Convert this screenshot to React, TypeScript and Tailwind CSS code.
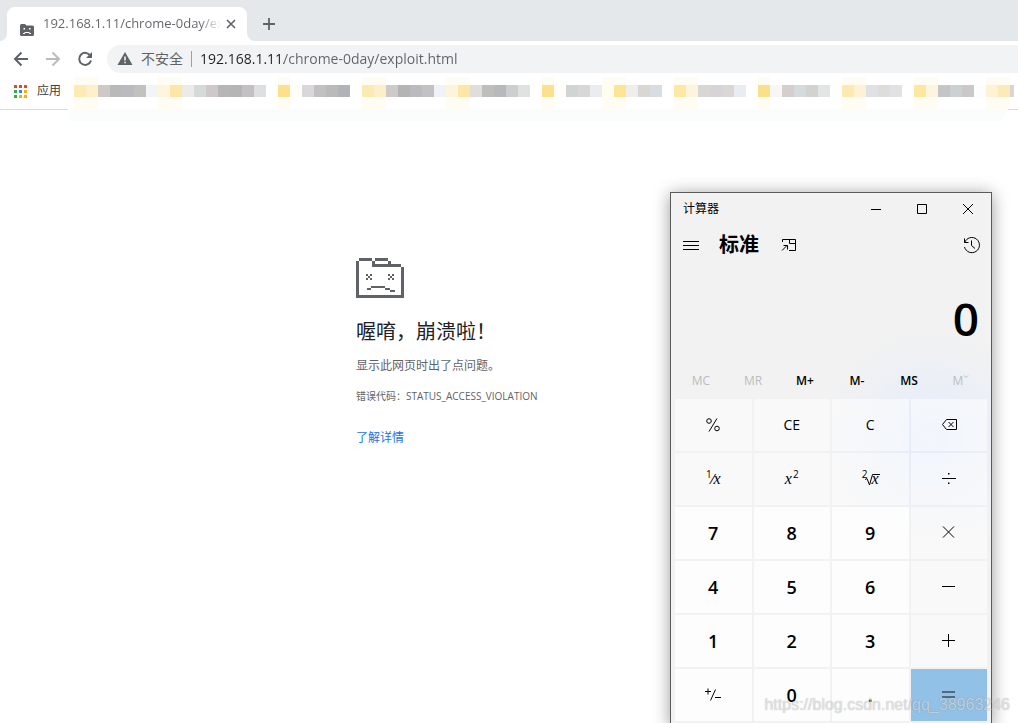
import type { ReactNode } from 'react';

// '' leaves a gap between two bookmarks
const bookmarkCells = [
  'bg-[#fdebb3]', 'bg-[#fdf0cb]', 'bg-[#cec9c6]', 'bg-[#b9b9b9]', 'bg-[#bcbabe]', 'bg-[#c1c2c0]', 'bg-[#f3f4f8]',
  'bg-[#fff5dd]', 'bg-[#fde7a6]', 'bg-[#ebebe9]', 'bg-[#d5dad8]', 'bg-[#cec8cb]', 'bg-[#b7b5b8]', 'bg-[#b5b5b5]',
  'bg-[#c3c0c4]', 'bg-[#dedfe1]', '', 'bg-[#fce08c]', 'bg-[#fffdf8]', 'bg-[#d9d7d9]', 'bg-[#c0c1c0]',
  'bg-[#bbbaba]', 'bg-[#b2b3b8]', '', 'bg-[#fceab3]', 'bg-[#fbf0cb]', 'bg-[#cfcaca]', 'bg-[#b4b4b4]',
  'bg-[#bcbabe]', 'bg-[#c2c2c5]', 'bg-[#f1f2f6]', 'bg-[#fdf4dc]', 'bg-[#fde7a6]', 'bg-[#e2dddd]', 'bg-[#bebebb]',
  'bg-[#b8b9bc]', 'bg-[#cdcecf]', 'bg-[#dfe2e1]', '', 'bg-[#fce08c]', 'bg-[#fffdfa]', 'bg-[#d0d4d3]',
  'bg-[#d8d7d5]', 'bg-[#eaecf0]', 'bg-[#fffcf0]', 'bg-[#fde596]', 'bg-[#f0eeed]', 'bg-[#d8d7d4]', 'bg-[#d8dce3]',
  '', 'bg-[#fde8a4]', 'bg-[#fdf4dc]', 'bg-[#d7d7d5]', 'bg-[#d6d4d7]', 'bg-[#dbd7d6]', 'bg-[#e9edf2]',
  '', 'bg-[#fbe08a]', 'bg-[#f8f7f6]', 'bg-[#d4cfcd]', 'bg-[#d5dadd]', 'bg-[#d2d3d1]', 'bg-[#e3e4e4]',
  '', 'bg-[#fdeab0]', 'bg-[#fdf2d5]', 'bg-[#e0e1e2]', 'bg-[#dddedc]', 'bg-[#e2e2e5]', '',
  'bg-[#fde8a2]', 'bg-[#fdf5df]', 'bg-[#c4c5c6]', 'bg-[#cbd0d2]', 'bg-[#cac9c7]', 'bg-[#fcfdff]', 'bg-[#fef2d3]',
  'bg-[#fbeaba]',
];

// cells where a folder icon sits, they have a pale halo above and below
const folderCells = [0, 1, 7, 8, 17, 24, 25, 31, 32, 39, 44, 45, 50, 51, 57, 64, 65, 70, 71, 76, 77];

const appDots = [
  'bg-[#ea4335]', 'bg-[#ea4335]', 'bg-[#ea4335]',
  'bg-[#34a853]', 'bg-[#1a8cff]', 'bg-[#fbab05]',
  'bg-[#34a853]', 'bg-[#fbab05]', 'bg-[#fbab05]',
];

const memoryKeys = [
  { label: 'MC', disabled: true },
  { label: 'MR', disabled: true },
  { label: 'M+', disabled: false },
  { label: 'M-', disabled: false },
  { label: 'MS', disabled: false },
];

function LineIcon({ d, className = 'size-4' }: { d: string; className?: string }) {
  return (
    <svg className={className} viewBox="0 0 16 16" fill="none" stroke="currentColor" strokeWidth={1}>
      <path d={d} />
    </svg>
  );
}

type KeyKind = 'number' | 'function' | 'equals';

const keys: { name: string; kind: KeyKind; face: ReactNode }[] = [
  {
    name: '百分比',
    kind: 'function',
    face: (
      <svg className="size-4" viewBox="0 0 16 16" fill="none" stroke="currentColor" strokeWidth={1}>
        <circle cx="4" cy="4" r="2.300" />
        <circle cx="12" cy="11.500" r="2.300" />
        <path d="M12 1.500L4 14.500" />
      </svg>
    ),
  },
  { name: '清除条目', kind: 'function', face: 'CE' },
  { name: '清除', kind: 'function', face: 'C' },
  { name: '退格', kind: 'function', face: <LineIcon d="M5.500 2.500H15.500V12.500H5.500L1.500 7.500ZM7.500 5L12.500 10M12.500 5L7.500 10" /> },
  {
    name: '倒数',
    kind: 'function',
    face: (
      <span className="flex items-center">
        <sup className="text-[10px]">1</sup>
        <span>⁄</span>
        <i className="font-['Liberation_Serif',serif] text-base">x</i>
      </span>
    ),
  },
  {
    name: '平方',
    kind: 'function',
    face: (
      <span className="flex items-center">
        <i className="font-['Liberation_Serif',serif] text-base">x</i>
        <sup className="ml-px text-[10px]">2</sup>
      </span>
    ),
  },
  {
    name: '平方根',
    kind: 'function',
    face: (
      <span className="flex items-center">
        <sup className="-mr-1 text-[10px]">2</sup>
        <svg className="-mr-2 h-4 w-4" viewBox="0 0 16 16" fill="none" stroke="currentColor">
          <path d="M1 8.500L3 7.500L5.500 14L8.500 3.500H16" />
        </svg>
        <i className="font-['Liberation_Serif',serif] text-base">x</i>
      </span>
    ),
  },
  {
    name: '除以',
    kind: 'function',
    face: (
      <svg className="size-4" viewBox="0 0 16 16" fill="currentColor">
        <path d="M1 7H15V8H1ZM7 2H8.500V3.500H7ZM7 11.500H8.500V13H7Z" />
      </svg>
    ),
  },
  { name: '7', kind: 'number', face: '7' },
  { name: '8', kind: 'number', face: '8' },
  { name: '9', kind: 'number', face: '9' },
  { name: '乘以', kind: 'function', face: <LineIcon d="M2 1.500L13 12.500M13 1.500L2 12.500" /> },
  { name: '4', kind: 'number', face: '4' },
  { name: '5', kind: 'number', face: '5' },
  { name: '6', kind: 'number', face: '6' },
  { name: '减', kind: 'function', face: <LineIcon d="M1 7.500H14" /> },
  { name: '1', kind: 'number', face: '1' },
  { name: '2', kind: 'number', face: '2' },
  { name: '3', kind: 'number', face: '3' },
  { name: '加', kind: 'function', face: <LineIcon d="M1 7.500H14M7.500 1V14" /> },
  { name: '正负', kind: 'number', face: <LineIcon d="M0 4.500H6M3 1.500V7.500M10.500 2.500L5.500 13.500M10 10.500H16" /> },
  { name: '0', kind: 'number', face: '0' },
  { name: '小数点', kind: 'number', face: '.' },
  {
    name: '等于',
    kind: 'equals',
    face: (
      <svg className="size-4" viewBox="0 0 16 16" fill="currentColor">
        <path d="M1 4H14V6H1ZM1 9H14V11H1Z" />
      </svg>
    ),
  },
];

const keyStyles: Record<KeyKind, string> = {
  number: 'bg-white/85 text-lg font-semibold',
  function: 'bg-white/50 text-sm',
  equals: 'bg-[#91c1e7] text-[#4f6b82]',
};

function TabStrip() {
  return (
    <div className="flex h-[41px] items-end bg-[#e5e8eb] text-[#5f6368]">
      <div className="h-2 w-[7px] bg-white">
        <div className="h-full rounded-br-lg bg-[#e5e8eb]" />
      </div>
      <div className="flex h-[34px] w-60 items-center rounded-t-lg bg-white pr-2.5 pl-3">
        <svg className="mt-3 mr-2 h-3 w-4 shrink-0" viewBox="0 0 16 12">
          <path d="M1 1.500Q1 0 2.500 0H6L7.500 1.500H13.500Q15 1.500 15 3V10.500Q15 12 13.500 12H2.500Q1 12 1 10.500Z" fill="#5f6368" />
          <path d="M4.500 4H6V5.500H4.500ZM10 4H11.500V5.500H10ZM5.500 8H10.500V9H12V10H10V9H6V10H4V9H5.500Z" fill="#fff" />
        </svg>
        <span className="min-w-0 flex-1 overflow-hidden bg-[linear-gradient(90deg,#5f6368_88%,transparent)] bg-clip-text text-[13px] whitespace-nowrap text-transparent">
          192.168.1.11/chrome-0day/exploit.html
        </span>
        <button aria-label="关闭标签页" className="ml-1">
          <svg className="size-3" viewBox="0 0 12 12" stroke="currentColor" strokeWidth={1.6}>
            <path d="M2 2L10 10M10 2L2 10" />
          </svg>
        </button>
      </div>
      <div className="h-2 w-2 bg-white">
        <div className="h-full rounded-bl-lg bg-[#e5e8eb]" />
      </div>
      <button aria-label="打开新的标签页" className="ml-2 flex h-[34px] items-center">
        <svg className="size-3" viewBox="0 0 12 12" stroke="currentColor" strokeWidth={1.8}>
          <path d="M6 0V12M0 6H12" />
        </svg>
      </button>
    </div>
  );
}

function Toolbar() {
  return (
    <div className="flex h-9 items-center pl-[13px] text-[#5f6368]">
      <button aria-label="后退" className="mr-4">
        <svg className="size-4" viewBox="0 0 16 16" fill="none" stroke="currentColor" strokeWidth={2}>
          <path d="M15 8H2.500M8.500 1.500L2 8L8.500 14.500" />
        </svg>
      </button>
      <button aria-label="前进" disabled className="mr-4 text-[#babcbe]">
        <svg className="size-4" viewBox="0 0 16 16" fill="none" stroke="currentColor" strokeWidth={2}>
          <path d="M1 8H13.500M7.500 1.500L14 8L7.500 14.500" />
        </svg>
      </button>
      <button aria-label="重新加载" className="mr-3.5">
        <svg className="size-4" viewBox="0 0 16 16" fill="none" stroke="currentColor" strokeWidth={2}>
          <path d="M13.500 5A6 6 0 1 0 14 9.500" />
          <path d="M15 1V7H9Z" fill="currentColor" stroke="none" />
        </svg>
      </button>
      <div className="flex h-7 flex-1 items-center rounded-l-full bg-[#f1f3f4] pl-2.5 text-sm">
        <svg className="size-4" viewBox="0 0 16 16">
          <path d="M8 1L15.500 14H0.500Z" fill="#5f6368" />
          <path d="M7.200 5.500H8.800V9.500H7.200ZM7.200 10.700H8.800V12.200H7.200Z" fill="#f1f3f4" />
        </svg>
        <span className="ml-2 whitespace-nowrap">不安全</span>
        <span className="mx-2 h-4 w-px bg-[#9aa0a6]" />
        <input
          aria-label="地址栏"
          defaultValue="192.168.1.11/chrome-0day/exploit.html"
          className="min-w-0 flex-1 bg-[linear-gradient(90deg,#202124_84px,#5f6368_84px)] bg-clip-text text-transparent outline-none"
        />
      </div>
    </div>
  );
}

function BookmarksBar() {
  return (
    <div className="relative flex h-[33px] items-start border-b border-[#d9dbdd] pt-1.5 pl-3.5">
      <button className="flex items-center text-xs text-[#3c4043]">
        <span className="grid grid-cols-3 gap-0.5">
          {appDots.map((color, i) => (
            <span key={i} className={`size-[3px] ${color}`} />
          ))}
        </span>
        <span className="ml-2.5 whitespace-nowrap">应用</span>
      </button>
      <div className="absolute top-8 right-2.5 left-[68px] h-3 rounded-bl-[32px] rounded-br-[64px] bg-[#fbfdfc]" />
      <div className="absolute inset-y-0 right-0 left-[74px] flex overflow-hidden">
        {bookmarkCells.map((color, i) => (
          <div
            key={i}
            className={`w-3 shrink-0 pt-2 ${folderCells.includes(i) ? 'bg-[#fffcf4]' : ''}`}
          >
            <div className={`h-3 w-full ${color}`} />
          </div>
        ))}
        <div className="mt-2 h-3 w-1 shrink-0 bg-[#d8d6d5]" />
      </div>
    </div>
  );
}

function CrashPage() {
  return (
    <main className="mx-auto w-[306px] pt-[148px] text-xs text-[#5f6368]">
      <svg className="h-10 w-12" viewBox="0 0 48 40" fill="#5f6368" shapeRendering="crispEdges">
        <path d="M3 0H16V3H3ZM19 0H32V3H19ZM32 3H35V6H32ZM16 3H19V6H45V9H16ZM0 3H3V37H45V9H48V40H0Z" />
        <path d="M10 16h2v2h-2zM14 16h2v2h-2zM12 18h2v2h-2zM10 20h2v2h-2zM14 20h2v2h-2z" />
        <path d="M32 16h2v2h-2zM36 16h2v2h-2zM34 18h2v2h-2zM32 20h2v2h-2zM36 20h2v2h-2z" />
        <path d="M15 28H29V30H15ZM11 30H15V32H11ZM29 30H34V32H29ZM34 32H39V34H34Z" />
      </svg>
      <h1 className="mt-5 text-xl leading-7 text-[#202124]">喔唷，崩溃啦！</h1>
      <p className="mt-3 leading-4">显示此网页时出了点问题。</p>
      <p className="mt-4 text-[10px] leading-3">错误代码：STATUS_ACCESS_VIOLATION</p>
      <a href="#details" className="mt-7 inline-block text-[#1a73e8]">
        了解详情
      </a>
    </main>
  );
}

function Calculator() {
  return (
    <section className="absolute top-48 right-[26px] w-[322px] border border-[#5a5a5a] bg-[#f2f2f2] bg-[radial-gradient(circle_at_260px_245px,#e3ecfa,#f2f2f2_110px)] pb-1 text-black shadow-[0_2px_16px_rgba(0,0,0,0.4)]">
      <header className="flex h-8 items-center pl-3 text-xs">
        <span className="flex-1">计算器</span>
        <button aria-label="最小化" className="flex w-[46px] justify-center">
          <LineIcon d="M3 8.500H13" />
        </button>
        <button aria-label="最大化" className="flex w-[46px] justify-center">
          <LineIcon d="M3.500 3.500H12.500V12.500H3.500Z" />
        </button>
        <button aria-label="关闭" className="flex w-[46px] justify-center">
          <LineIcon d="M3 3L13 13M13 3L3 13" />
        </button>
      </header>
      <div className="flex h-10 items-center pr-2.5 pl-3">
        <button aria-label="打开导航">
          <LineIcon d="M0 4.500H16M0 8.500H16M0 12.500H16" />
        </button>
        <h2 className="ml-5 text-xl font-bold">标准</h2>
        <button aria-label="保持在顶部" className="ml-[22px]">
          <LineIcon d="M1.500 5V2.500H14.500V13.500H8M8.500 2.500V6.500H14.500M1 13.500L6 8.500M2.500 8.500H6.500V12.500" />
        </button>
        <button aria-label="历史记录" className="ml-auto">
          <svg className="size-[18px]" viewBox="0 0 18 18" fill="none" stroke="currentColor" strokeWidth={1}>
            <path d="M1.500 2.500V6.500H5.500M1.700 6.500A7.600 7.600 0 1 1 1.500 11M8.500 4.500V9.500L12 12.500" />
          </svg>
        </button>
      </div>
      <output className="flex h-[98px] items-center justify-end px-3 pt-2 text-[46px] leading-none font-semibold">0</output>
      <div className="grid h-9 grid-cols-6 px-1 text-xs">
        {memoryKeys.map(({ label, disabled }) => (
          <button key={label} disabled={disabled} className="font-semibold disabled:font-normal disabled:text-[#bdbdbd]">
            {label}
          </button>
        ))}
        <button disabled className="flex items-center justify-center text-[#bdbdbd]">
          M
          <svg className="mb-2 h-1 w-1.5" viewBox="0 0 6 4" fill="none" stroke="currentColor">
            <path d="M1 0.500L3 2.500L5 0.500" />
          </svg>
        </button>
      </div>
      <div className="grid grid-cols-4 gap-0.5 px-1">
        {keys.map(({ name, kind, face }) => (
          <button key={name} aria-label={name} className={`flex h-[52px] items-center justify-center ${keyStyles[kind]}`}>
            {face}
          </button>
        ))}
      </div>
    </section>
  );
}

export default function App() {
  return (
    <div className="relative h-screen overflow-hidden bg-white font-['Open_Sans','Noto_Sans_CJK_SC',sans-serif]">
      <TabStrip />
      <Toolbar />
      <BookmarksBar />
      <CrashPage />
      <Calculator />
      <div className="absolute right-2 bottom-1.5 font-['Liberation_Sans',sans-serif] text-base text-white/60 [text-shadow:0_0_1px_rgba(0,0,0,0.35)]">
        https://blog.csdn.net/qq_38963246
      </div>
    </div>
  );
}
